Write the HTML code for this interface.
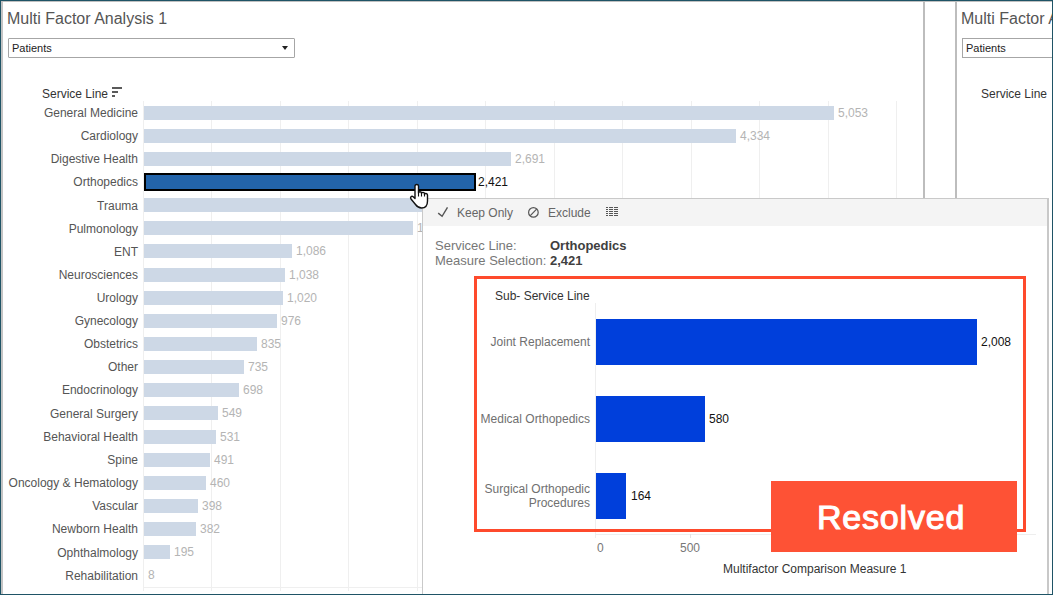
<!DOCTYPE html>
<html><head><meta charset="utf-8">
<style>
*{margin:0;padding:0;box-sizing:border-box}
html,body{width:1053px;height:595px;overflow:hidden;background:#fff}
body{position:relative;font-family:"Liberation Sans",sans-serif}
.a{position:absolute}
.t{position:absolute;white-space:nowrap;line-height:1}
.lab{position:absolute;white-space:nowrap;font-size:12px;color:#555;text-align:right;right:915px;line-height:14px}
.val{position:absolute;white-space:nowrap;font-size:12px;color:#b4b4b4;line-height:14px}
.bar{position:absolute;left:144px;height:14px;background:#cdd8e6}
.grid{position:absolute;top:101px;height:490px;width:1px;background:#efefef}
</style></head><body>

<div class="a" style="left:0;top:0;width:1053px;height:595px;border:1px solid #1f5466;z-index:10"></div>
<div class="a" style="left:1px;top:1px;width:2px;height:593px;background:#c4c4c4"></div>
<div class="a" style="left:1px;top:1px;width:1051px;height:1px;background:#c0c0c0"></div>
<div class="a" style="left:923px;top:1px;width:2px;height:593px;background:#bdbdbd"></div>
<div class="a" style="left:955px;top:1px;width:2px;height:593px;background:#bdbdbd"></div>
<div class="t" style="left:7px;top:11px;font-size:16px;color:#555">Multi Factor Analysis 1</div>
<div class="a" style="left:8px;top:38px;width:287px;height:20px;border:1px solid #a6a6a6;border-radius:1px"></div>
<div class="t" style="left:12px;top:43px;font-size:11px;color:#222">Patients</div>
<div class="a" style="left:282px;top:46px;width:0;height:0;border-left:3px solid transparent;border-right:3px solid transparent;border-top:4px solid #222"></div>
<div class="t" style="left:961px;top:11px;font-size:16px;color:#555">Multi Factor Analysis 2</div>
<div class="a" style="left:962px;top:38px;width:287px;height:20px;border:1px solid #a6a6a6"></div>
<div class="t" style="left:966px;top:43px;font-size:11px;color:#222">Patients</div>
<div class="t" style="left:981px;top:88px;font-size:12px;color:#333">Service Line</div>
<div class="t" style="left:42px;top:88px;font-size:12px;color:#333">Service Line</div>
<div class="a" style="left:112px;top:87px;width:10px;height:2px;background:#5a5a5a"></div>
<div class="a" style="left:112px;top:91px;width:6px;height:2px;background:#5a5a5a"></div>
<div class="a" style="left:112px;top:95px;width:3px;height:2px;background:#5a5a5a"></div>
<div class="grid" style="left:143px"></div>
<div class="grid" style="left:211px"></div>
<div class="grid" style="left:280px"></div>
<div class="grid" style="left:348px"></div>
<div class="grid" style="left:417px"></div>
<div class="grid" style="left:485px"></div>
<div class="grid" style="left:554px"></div>
<div class="grid" style="left:622px"></div>
<div class="grid" style="left:691px"></div>
<div class="grid" style="left:759px"></div>
<div class="grid" style="left:828px"></div>
<div class="grid" style="left:896px"></div>
<div class="a" style="left:143px;top:587px;width:780px;height:1px;background:#efefef"></div>
<div class="bar" style="top:106px;width:690px"></div>
<div class="val" style="left:838px;top:106px">5,053</div>
<div class="lab" style="top:106px">General Medicine</div>
<div class="bar" style="top:129px;width:592px"></div>
<div class="val" style="left:740px;top:129px">4,334</div>
<div class="lab" style="top:129px">Cardiology</div>
<div class="bar" style="top:152px;width:367px"></div>
<div class="val" style="left:515px;top:152px">2,691</div>
<div class="lab" style="top:152px">Digestive Health</div>
<div class="a" style="left:144px;top:173px;width:332px;height:18px;background:#2364aa;border:2px solid #000"></div>
<div class="val" style="left:478px;top:175px;color:#111">2,421</div>
<div class="lab" style="top:175px">Orthopedics</div>
<div class="bar" style="top:198px;width:292px"></div>
<div class="val" style="left:440px;top:198px">2,140</div>
<div class="lab" style="top:199px">Trauma</div>
<div class="bar" style="top:221px;width:269px"></div>
<div class="val" style="left:417px;top:221px">1,972</div>
<div class="lab" style="top:222px">Pulmonology</div>
<div class="bar" style="top:244px;width:148px"></div>
<div class="val" style="left:296px;top:244px">1,086</div>
<div class="lab" style="top:245px">ENT</div>
<div class="bar" style="top:268px;width:141px"></div>
<div class="val" style="left:289px;top:268px">1,038</div>
<div class="lab" style="top:268px">Neurosciences</div>
<div class="bar" style="top:291px;width:139px"></div>
<div class="val" style="left:287px;top:291px">1,020</div>
<div class="lab" style="top:291px">Urology</div>
<div class="bar" style="top:314px;width:133px"></div>
<div class="val" style="left:281px;top:314px">976</div>
<div class="lab" style="top:314px">Gynecology</div>
<div class="bar" style="top:337px;width:113px"></div>
<div class="val" style="left:261px;top:337px">835</div>
<div class="lab" style="top:337px">Obstetrics</div>
<div class="bar" style="top:360px;width:100px"></div>
<div class="val" style="left:248px;top:360px">735</div>
<div class="lab" style="top:360px">Other</div>
<div class="bar" style="top:383px;width:95px"></div>
<div class="val" style="left:243px;top:383px">698</div>
<div class="lab" style="top:383px">Endocrinology</div>
<div class="bar" style="top:406px;width:74px"></div>
<div class="val" style="left:222px;top:406px">549</div>
<div class="lab" style="top:407px">General Surgery</div>
<div class="bar" style="top:430px;width:72px"></div>
<div class="val" style="left:220px;top:430px">531</div>
<div class="lab" style="top:430px">Behavioral Health</div>
<div class="bar" style="top:453px;width:66px"></div>
<div class="val" style="left:214px;top:453px">491</div>
<div class="lab" style="top:453px">Spine</div>
<div class="bar" style="top:476px;width:62px"></div>
<div class="val" style="left:210px;top:476px">460</div>
<div class="lab" style="top:476px">Oncology &amp; Hematology</div>
<div class="bar" style="top:499px;width:54px"></div>
<div class="val" style="left:202px;top:499px">398</div>
<div class="lab" style="top:499px">Vascular</div>
<div class="bar" style="top:522px;width:52px"></div>
<div class="val" style="left:200px;top:522px">382</div>
<div class="lab" style="top:522px">Newborn Health</div>
<div class="bar" style="top:545px;width:26px"></div>
<div class="val" style="left:174px;top:545px">195</div>
<div class="lab" style="top:546px">Ophthalmology</div>
<div class="val" style="left:148px;top:568px">8</div>
<div class="lab" style="top:569px">Rehabilitation</div>
<div class="a" style="left:422px;top:198px;width:627px;height:397px;background:#fff;border:1px solid #c9c9c9;border-right:2px solid #c8c8c8;border-bottom:none"></div>
<div class="a" style="left:423px;top:199px;width:624px;height:27px;background:#f4f4f4"></div>
<svg class="a" style="left:436px;top:206px" width="14" height="13" viewBox="0 0 14 13"><path d="M2.2,7.1 L6.1,10.3 L11.5,1.4" fill="none" stroke="#555" stroke-width="1.4"/></svg>
<div class="t" style="left:457px;top:207px;font-size:12px;color:#666">Keep Only</div>
<svg class="a" style="left:527px;top:206px" width="14" height="14" viewBox="0 0 14 14"><circle cx="6.4" cy="6.4" r="4.8" fill="none" stroke="#555" stroke-width="1.2"/><path d="M3.3,9.7 L9.6,3.1" stroke="#555" stroke-width="1.2"/></svg>
<div class="t" style="left:548px;top:207px;font-size:12px;color:#666">Exclude</div>
<div class="a" style="left:606px;top:207px;width:12px;height:9px;background:repeating-linear-gradient(to bottom,#555 0 1px,transparent 1px 2px);-webkit-mask:linear-gradient(to right,#000 0 2px,transparent 2px 3px,#000 3px 7px,transparent 7px 8px,#000 8px 12px)"></div>
<div class="t" style="left:435px;top:239px;font-size:13px;color:#777">Servicec Line:</div>
<div class="t" style="left:435px;top:254px;font-size:13px;color:#777">Measure Selection:</div>
<div class="t" style="left:550px;top:239px;font-size:13px;color:#404040;font-weight:bold">Orthopedics</div>
<div class="t" style="left:550px;top:254px;font-size:13px;color:#404040;font-weight:bold">2,421</div>
<div class="t" style="left:495px;top:290px;font-size:12px;color:#333">Sub- Service Line</div>
<div class="a" style="left:595px;top:303px;width:1px;height:235px;background:#eeeeee"></div>
<div class="a" style="left:596px;top:534px;width:440px;height:1px;background:#eeeeee"></div>
<div class="a" style="left:690px;top:534px;width:1px;height:4px;background:#e4e4e4"></div>
<div class="a" style="left:596px;top:319px;width:381px;height:46px;background:#003fdb"></div>
<div class="t" style="left:981px;top:336px;font-size:12px;color:#111">2,008</div>
<div class="a" style="left:596px;top:396px;width:109px;height:46px;background:#003fdb"></div>
<div class="t" style="left:709px;top:413px;font-size:12px;color:#111">580</div>
<div class="a" style="left:596px;top:473px;width:30px;height:46px;background:#003fdb"></div>
<div class="t" style="left:631px;top:490px;font-size:12px;color:#111">164</div>
<div class="t" style="right:463px;top:336px;font-size:12px;color:#707070;text-align:right">Joint Replacement</div>
<div class="t" style="right:463px;top:413px;font-size:12px;color:#707070;text-align:right">Medical Orthopedics</div>
<div class="t" style="right:463px;top:482px;font-size:12px;color:#707070;text-align:right;line-height:14px">Surgical Orthopedic<br>Procedures</div>
<div class="t" style="left:597px;top:542px;font-size:12px;color:#777">0</div>
<div class="t" style="left:680px;top:542px;font-size:12px;color:#777">500</div>
<div class="t" style="left:723px;top:563px;font-size:12px;color:#333">Multifactor Comparison Measure 1</div>
<div class="a" style="left:474px;top:276px;width:552px;height:256px;border:3px solid #fe4a2c"></div>
<div class="a" style="left:771px;top:481px;width:246px;height:71px;background:#fe5235"></div>
<div class="t" style="left:817px;top:500px;font-size:34px;color:#fff;-webkit-text-stroke:1.1px #fff;letter-spacing:0.8px">Resolved</div>
<svg class="a" style="left:409px;top:183px" width="21" height="27" viewBox="0 0 21 27">
<path d="M6,3 C6,1 9.5,1 9.5,3 L9.5,10 C9.5,8.3 12.5,8.3 12.5,10 L12.5,10.5 C12.5,9 15.5,9 15.5,10.8 L15.5,11.5 C15.5,10 18.5,10 18.5,12 L18.5,18 C18.5,22.5 16,25 12.5,25 C9.5,25 8,23.5 6.5,21.5 L2,16 C0.8,14.5 2.5,12.5 4.2,13.8 L6,15.5 Z" fill="#fff" stroke="#111" stroke-width="1.4" stroke-linejoin="round"/>
<path d="M9.5,10 L9.5,13.5 M12.5,10.5 L12.5,13.5 M15.5,11.5 L15.5,13.5" stroke="#111" stroke-width="1.1"/>
</svg>
</body></html>
